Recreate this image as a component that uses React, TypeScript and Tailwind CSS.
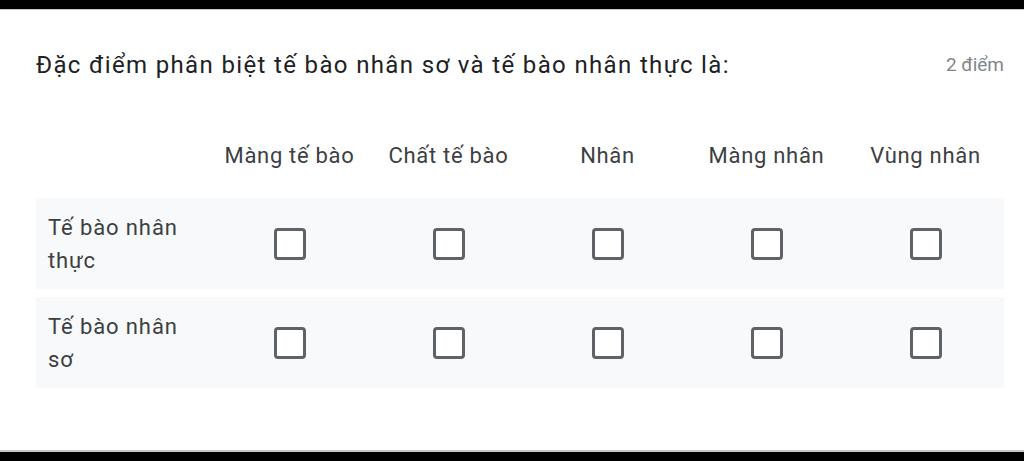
const columns = ["Màng tế bào", "Chất tế bào", "Nhân", "Màng nhân", "Vùng nhân"];
const rows = ["Tế bào nhân thực", "Tế bào nhân sơ"];

function Box() {
  return <span className="block w-[32px] h-[32px] rounded-[4px] border-[3px] border-[#5f6368] bg-white" />;
}

export default function App() {
  return (
    <div className="h-[461px] w-[1024px] bg-black flex flex-col font-['Roboto',sans-serif]">
      <div className="h-[9px] shrink-0" />
      <div className="flex-1 bg-white border-t border-b-2 border-[#c8c8c8] pl-[36px] pr-[20px] pt-[40px]">
        <div className="flex items-start justify-between">
          <h1 className="text-[24px] leading-[30px] tracking-[1.35px] text-[#202124]">
            Đặc điểm phân biệt tế bào nhân sơ và tế bào nhân thực là:
          </h1>
          <span className="text-[19px] leading-[30px] text-[#80868b]">2 điểm</span>
        </div>

        <div className="mt-[52px] grid grid-cols-[174px_repeat(5,159px)] h-[46px] items-center text-[22px] tracking-[0.7px] text-[#3c4043]">
          <div />
          {columns.map((c) => (
            <div key={c} className="text-center">{c}</div>
          ))}
        </div>

        <div className="mt-[20px] flex flex-col gap-[8px]">
          {rows.map((r) => (
            <div key={r} className="grid grid-cols-[174px_repeat(5,159px)] h-[91px] items-center bg-[#f8f9fa]">
              <div className="pl-[12px] w-[162px] text-[22px] leading-[33px] tracking-[0.9px] text-[#3c4043]">{r}</div>
              {columns.map((c) => (
                <div key={c} className="flex justify-center">
                  <Box />
                </div>
              ))}
            </div>
          ))}
        </div>
      </div>
      <div className="h-[9px] shrink-0" />
    </div>
  );
}
